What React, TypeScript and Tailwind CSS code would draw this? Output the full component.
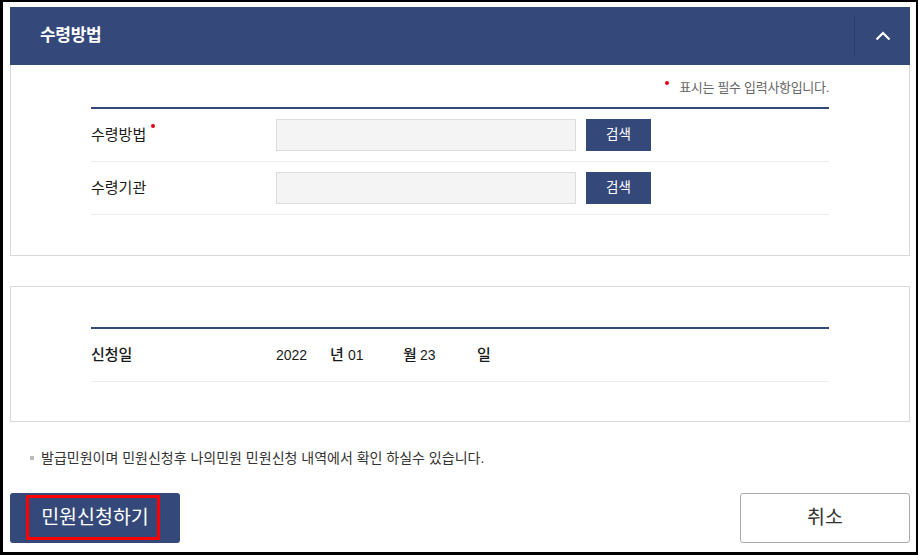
import { ReactNode } from "react";

const font = { fontFamily: '"Liberation Sans", "Noto Sans CJK KR", sans-serif' };

function FieldRow({ label, required, children }: { label: string; required?: boolean; children: ReactNode }) {
  return (
    <div className="flex h-[53px] items-center border-b border-[#ebebeb]">
      <div className="w-[185px] text-[15px] text-[#1a1a1a]">
        <span className="relative">
          {label}
          {required && (
            <span className="absolute -right-[9px] -top-[2px] h-[4px] w-[4px] rounded-full bg-[#e60012]" />
          )}
        </span>
      </div>
      {children}
    </div>
  );
}

function SearchField() {
  return (
    <div className="flex items-center gap-[10px]">
      <div className="h-[32px] w-[300px] border border-[#dcdcdc] bg-[#f4f4f4]" />
      <button className="h-[32px] w-[65px] bg-[#34497a] text-[13.5px] text-white">검색</button>
    </div>
  );
}

export default function App() {
  return (
    <div
      style={font}
      className="h-[555px] w-[918px] overflow-hidden border-b-[3px] border-l-[3px] border-r-2 border-t-2 border-black bg-white pl-[7px] pr-[6px] pt-[5px]"
    >
      {/* header */}
      <div className="flex h-[58px] items-center bg-[#34497a]">
        <h2 className="flex-1 pl-[30px] text-[17px] font-bold tracking-[-0.3px] text-white">수령방법</h2>
        <div className="h-[40px] w-px bg-[#2b3f6c]" />
        <div className="flex w-[55px] items-center justify-center">
          <svg width="16" height="10" viewBox="0 0 16 10" fill="none">
            <path d="M1.5 8.5 L8 2 L14.5 8.5" stroke="white" strokeWidth="2.2" />
          </svg>
        </div>
      </div>

      {/* receive method panel */}
      <div className="h-[191px] border border-t-0 border-[#d9d9d9] px-[80px] pt-[13px]">
        <div className="flex items-center justify-end text-[13px] leading-[20px] tracking-[-0.3px] text-[#666]">
          <span className="mb-[10px] mr-[10px] h-[4px] w-[4px] rounded-full bg-[#e60012]" />
          표시는 필수 입력사항입니다.
        </div>
        <div className="mt-[9px] h-[2px] bg-[#34497a]" />
        <FieldRow label="수령방법" required>
          <SearchField />
        </FieldRow>
        <FieldRow label="수령기관">
          <SearchField />
        </FieldRow>
      </div>

      {/* apply date panel */}
      <div className="mt-[30px] h-[136px] border border-[#d9d9d9] px-[80px] pt-[40px]">
        <div className="h-[2px] bg-[#34497a]" />
        <div className="flex h-[53px] items-center border-b border-[#ebebeb] text-[14px] text-[#1a1a1a]">
          <div className="w-[185px] text-[15px] font-medium">신청일</div>
          <span className="w-[54px]">2022</span>
          <span className="w-[18px] text-[15px] font-medium">년</span>
          <span className="w-[55px]">01</span>
          <span className="w-[17px] text-[15px] font-medium">월</span>
          <span className="w-[57px]">23</span>
          <span className="text-[15px] font-medium">일</span>
        </div>
      </div>

      {/* notice */}
      <div className="mt-[26px] flex items-center pl-[20px] text-[14px] leading-[20px] text-[#333]">
        <span className="mr-[7px] h-[4px] w-[4px] bg-[#bbb]" />
        발급민원이며 민원신청후 나의민원 민원신청 내역에서 확인 하실수 있습니다.
      </div>

      {/* buttons */}
      <div className="mt-[25px] flex justify-between">
        <button className="relative h-[50px] w-[170px] rounded-[3px] bg-[#34497a] text-[19.5px] text-white">
          민원신청하기
          <span className="absolute bottom-[3px] left-[16px] top-[2px] w-[134px] border-[3px] border-[#ff0000]" />
        </button>
        <button className="h-[50px] w-[170px] rounded-[3px] border border-[#aaa] bg-white text-[19.5px] text-[#333]">
          취소
        </button>
      </div>
    </div>
  );
}
